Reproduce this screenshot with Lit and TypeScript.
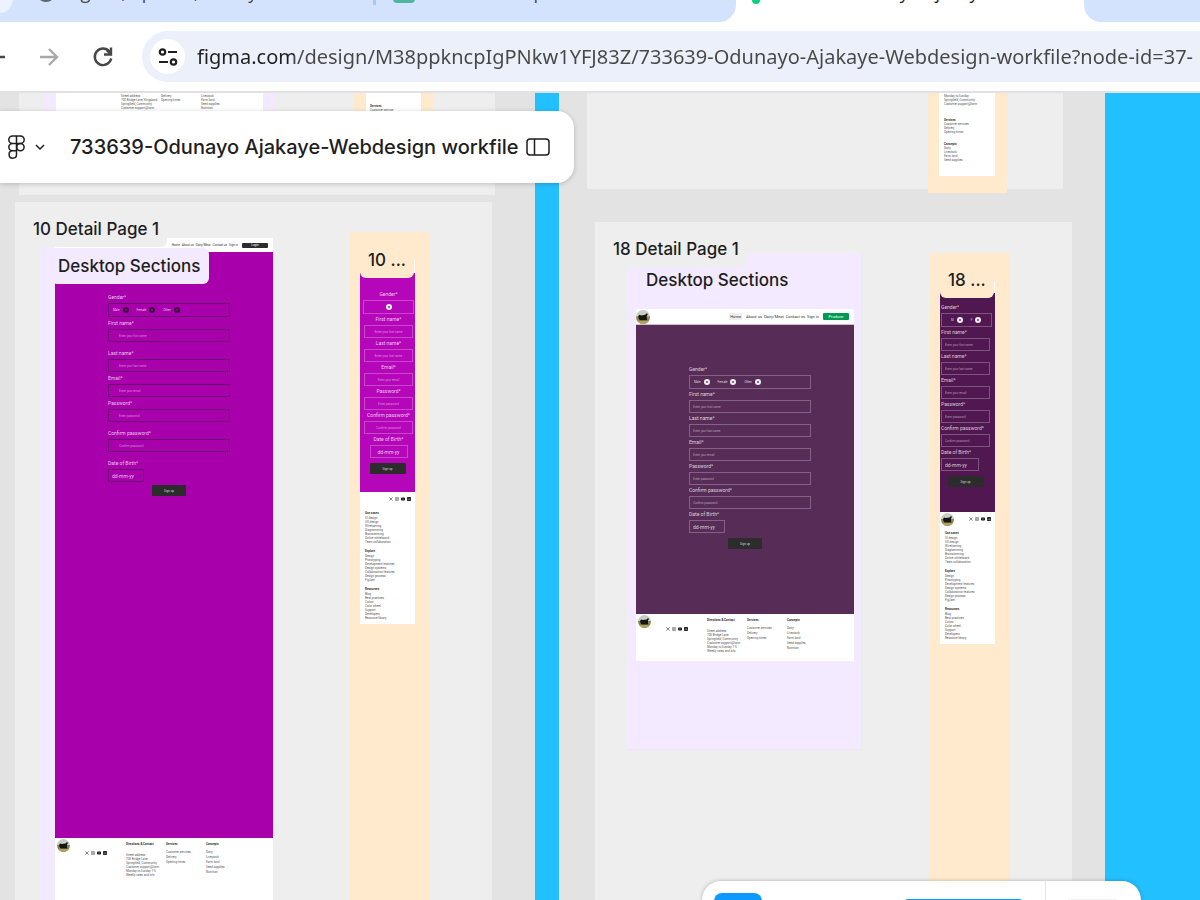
import { LitElement, html, css, svg } from "lit";
import { customElement, property } from "lit/decorators.js";

const avatar = svg`<svg class="avatar" viewBox="0 0 26 26">
  <defs><clipPath id="round"><circle cx="13" cy="13" r="13"/></clipPath></defs>
  <g clip-path="url(#round)">
    <rect width="26" height="13" fill="#c9ccc9"/>
    <rect y="12" width="26" height="14" fill="#8b8657"/>
    <rect y="20" width="26" height="6" fill="#b3a05f"/>
    <path d="M6 9l4 1 7-1 3-3 2 2-2 3v5l1 3H7l-2-3-1-4z" fill="#15180f"/>
  </g>
</svg>`;

const socials = html`<span class="socials">
  <svg viewBox="0 0 12 12"><path d="M1 1l10 10M11 1L1 11" stroke="#222" stroke-width="1.6" fill="none"/></svg>
  <svg viewBox="0 0 12 12"><rect x="1" y="1" width="10" height="10" rx="3" fill="none" stroke="#333" stroke-width="1.6"/><circle cx="6" cy="6" r="2.4" fill="none" stroke="#333" stroke-width="1.4"/></svg>
  <svg viewBox="0 0 12 12"><rect y="1.500" width="12" height="9" rx="3" fill="#111"/><path d="M5 4l3 2-3 2z" fill="#fff"/></svg>
  <svg viewBox="0 0 12 12"><rect width="12" height="12" rx="2" fill="#222"/><path d="M3 5v4M6 9V5M6 7q2-3 3 0v2" stroke="#fff" fill="none"/></svg>
</span>`;

const fields = [
  { key: "first", label: "First name*", hint: "Enter your first name", roomy: false },
  { key: "last", label: "Last name*", hint: "Enter your last name", roomy: true },
  { key: "email", label: "Email*", hint: "Enter your email", roomy: false },
  { key: "password", label: "Password*", hint: "Enter password", roomy: false },
  { key: "confirm", label: "Confirm password*", hint: "Confirm password", roomy: true },
];

@customElement("signup-form")
class SignupForm extends LitElement {
  @property({ type: Array }) options: string[] = [];
  @property() action = "Sign up";

  static styles = css`
    :host { display: block; font-family: Roboto, sans-serif; font-size: 5px; color: rgb(255 255 255 / 78%); --line: rgb(255 255 255 / 26%); --gap: 1px; --room: 0; --pad: 3px; --shift: 10px; }
    :host([tone="dark"]) { --line: rgb(50 0 60 / 50%); --gap: 2px; --room: 5px; --pad: 10px; --shift: 0; }
    form { display: flex; flex-direction: column; gap: var(--gap); margin: 0; }
    .field, fieldset { display: flex; flex-direction: column; gap: 2px; margin: 0; padding: 0; border: 0; min-width: 0; }
    .roomy { margin-top: var(--room); }
    label, legend { line-height: 8px; padding: 0; }
    legend { margin-bottom: 2px; }
    .box, .options { box-sizing: border-box; height: 13px; border: 1px solid var(--line); border-radius: 0; background: none; color: inherit; outline: 0; }
    .box { width: 100%; padding: 0 var(--pad); font: 3px Roboto, sans-serif; }
    .box::placeholder { color: rgb(255 255 255 / 50%); opacity: 1; }
    .options { display: flex; align-items: center; gap: 8px; height: 14px; padding: 0 4px; }
    .option { display: flex; align-items: center; gap: 3px; font-size: 3px; }
    .option input { appearance: none; width: 6px; height: 6px; margin: 0; border-radius: 50%; background: #555; border: 2px solid #eee; }
    :host([tone="dark"]) .option input { background: #a400a8; border-color: #3b0640; }
    .date .box { width: 36px; font-size: 5px; padding: 0 3px; }
    .date .box::placeholder { color: rgb(255 255 255 / 78%); }
    button { align-self: center; box-sizing: border-box; width: 34px; height: 11px; margin: 4px var(--shift) 0 0; padding: 0; border: 0; border-radius: 1px; background: #2c2c2c; color: #ddd; font: 3px Roboto, sans-serif; }
    :host([tone="dark"]) button { margin-top: 1px; }
    :host([size="phone"]) .field .box { width: 49px; }
    :host([size="phone"]) .date .box { width: 38px; }
    :host([size="phone"]) .options { width: 51px; padding: 0 9px; }
    :host([size="phone"]) button { width: 36px; margin: 4px 2px 0 0; }
    :host([align="center"]) .field { align-items: center; }
    :host([align="center"]) .box { text-align: center; }
    :host([align="center"]) legend { margin-left: auto; margin-right: auto; }
    :host([align="center"]) .options { justify-content: center; }
    :host([align="center"]) .option { gap: 0; }
  `;

  render() {
    return html`<form>
      <fieldset>
        <legend>Gender*</legend>
        <div class="options">
          ${this.options.map((o) => html`<label class="option">${o}<input type="radio" name="gender" aria-label="Gender" /></label>`)}
        </div>
      </fieldset>
      ${fields.map((f) => html`<div class=${f.roomy ? "field roomy" : "field"}>
        <label for=${f.key}>${f.label}</label>
        <input class="box" id=${f.key} placeholder=${f.hint} />
      </div>`)}
      <div class="field date roomy">
        <label for="dob">Date of Birth*</label>
        <input class="box" id="dob" placeholder="dd-mm-yy" />
      </div>
      <button type="button">${this.action}</button>
    </form>`;
  }
}

const deskColumns = [
  { title: "Directions & Contact", wide: true, rows: ["Street address", "700 Bridge Lane", "Springfield, Community", "Customer support@farm", "Monday to Sunday 7-5", "Weekly rates and info"] },
  { title: "Services", wide: false, rows: ["Customer services", "Delivery", "Opening times"] },
  { title: "Concepts", wide: false, rows: ["Dairy", "Livestock", "Farm land", "Seed supplies", "Nutrition"] },
];

const phoneGroups = [
  { title: "Use cases", rows: ["UI design", "UX design", "Wireframing", "Diagramming", "Brainstorming", "Online whiteboard", "Team collaboration"] },
  { title: "Explore", rows: ["Design", "Prototyping", "Development features", "Design systems", "Collaboration features", "Design process", "FigJam"] },
  { title: "Resources", rows: ["Blog", "Best practices", "Colors", "Color wheel", "Support", "Developers", "Resource library"] },
];

@customElement("site-footer")
class SiteFooter extends LitElement {
  @property({ type: Boolean }) phone = false;
  @property({ type: Boolean }) logo = false;

  static styles = css`
    :host { display: block; font-family: Roboto, sans-serif; font-size: 3px; color: #555; background: #fff; }
    .avatar { display: block; width: 13px; height: 13px; }
    .socials { display: flex; gap: 2px; }
    .socials svg { width: 4px; height: 4px; }
    h4 { margin: 0; font-size: 3px; line-height: 4px; font-weight: 600; color: #222; white-space: nowrap; }
    ul { margin: 0; padding: 0; list-style: none; white-space: nowrap; }
    .desk { display: flex; padding: 1px 2px; }
    .desk .socials { margin: 12px 19px 0 15px; }
    .desk section { width: 40px; padding-top: 3px; }
    .desk ul { padding-top: 4px; }
    .desk .wide { padding-top: 7px; }
    .desk li { line-height: 5px; }
    .desk .wide li { line-height: 4px; }
    .top { display: flex; align-items: center; justify-content: space-between; height: 14px; padding: 0 4px 0 1px; }
    .top .socials { margin-left: auto; }
    .groups { display: flex; flex-direction: column; gap: 4px; padding: 4px 5px 3px; }
    .groups h4 { line-height: 6px; }
    .groups li { line-height: 4px; }
  `;

  render() {
    return this.phone
      ? html`<div class="top">${this.logo ? avatar : ""}${socials}</div>
          <div class="groups">${phoneGroups.map((g) => html`<section><h4>${g.title}</h4><ul>${g.rows.map((r) => html`<li>${r}</li>`)}</ul></section>`)}</div>`
      : html`<div class="desk">${avatar}${socials}
          ${deskColumns.map((c) => html`<section><h4>${c.title}</h4><ul class=${c.wide ? "wide" : ""}>${c.rows.map((r) => html`<li>${r}</li>`)}</ul></section>`)}</div>`;
  }
}

@customElement("app-root")
class AppRoot extends LitElement {
  static styles = css`
    :host { display: flex; flex-direction: column; height: 100vh; overflow: hidden; font-family: Inter, sans-serif; color: #1e1e1e; background: #fff; }
    * { box-sizing: border-box; }
    button { padding: 0; border: 0; background: none; color: inherit; font: inherit; }
    svg { display: block; }

    .tabs { flex: none; height: 22px; display: flex; align-items: flex-end; overflow: hidden; background: #fff; font: 18px/26px "Open Sans", sans-serif; }
    .tab { display: flex; align-items: center; height: 26px; margin-bottom: 17px; white-space: nowrap; color: #474747; }
    .group { display: flex; align-items: flex-end; width: 736px; background: #d3e3fd; border-radius: 0 0 17px 0; }
    .search { width: 33px; height: 33px; margin: 0 13px 9px -20px; border-radius: 14px; background: #ecf3fe; }
    .first { width: 350px; padding-left: 10px; gap: 10px; border-right: 3px solid #a8c7fa; }
    .second { padding-left: 17px; gap: 15px; }
    .globe { width: 20px; height: 20px; border-radius: 50%; background: #5f6368; }
    .sheet { width: 22px; height: 22px; border-radius: 4px; background: #4db6a0; }
    .current { width: 348px; padding-left: 16px; gap: 15px; color: #1f1f1f; }
    .dot { width: 8px; height: 24px; border-radius: 4px; background: #0acf83; }
    .tabs .rest { flex: 1; height: 56px; background: #d3e3fd; border-radius: 0 0 0 17px; }

    .toolbar { flex: none; display: flex; align-items: center; height: 71px; border-bottom: 2px solid #e1e1e1; }
    .back { width: 5px; height: 24px; overflow: hidden; display: flex; justify-content: flex-end; }
    .back svg, .forward svg { width: 24px; height: 24px; flex: none; }
    .forward { margin-left: 31px; }
    .reload { margin-left: 31px; }
    .reload svg { width: 24px; height: 24px; }
    .address { flex: 1; min-width: 0; display: flex; align-items: center; height: 51px; margin-left: 27px; padding-left: 8px; border-radius: 26px 0 0 26px; background: #ecf0fa; }
    .tune { flex: none; display: grid; place-items: center; width: 35px; height: 35px; border-radius: 50%; background: #fff; }
    .tune svg { width: 20px; height: 20px; }
    .url { flex: 1; min-width: 0; margin-left: 12px; padding: 0; border: 0; outline: 0; font: 20px/30px "Noto Sans", sans-serif; color: transparent; background: linear-gradient(90deg, #1f1f1f 97px, #474747 97px); background-clip: text; -webkit-background-clip: text; }

    .canvas { flex: 1; min-height: 0; position: relative; overflow: hidden; background: #e3e3e3; }
    .canvas > * { position: absolute; }
    .board { background: #eee; }
    .board-a { left: 19px; top: 0; width: 476px; height: 102px; }
    .board-b { left: 15px; top: 109px; width: 477px; bottom: 0; }
    .board-c { left: 587px; top: 0; width: 476px; height: 96px; }
    .board-d { left: 595px; top: 129px; width: 477px; bottom: 0; }
    .blue { background: #23c0ff; top: 0; bottom: 0; }
    .blue-mid { left: 535px; width: 24px; }
    .blue-end { left: 1105px; right: 0; }
    .section { background: #f3eaff; }
    .peach { background: #ffeacd; }
    .section-a { left: 43px; top: 0; width: 233px; height: 30px; padding: 0 13px; }
    .section-b { left: 40px; top: 145px; width: 233px; bottom: 0; padding-left: 15px; }
    .section-d { left: 628px; top: 160px; width: 234px; height: 497px; padding: 56px 8px; border: 1px solid #efe5fa; border-width: 0 1px 1px 0; }
    .peach-a { left: 354px; top: 0; width: 79px; height: 30px; padding: 0 12px; }
    .peach-b { left: 350px; top: 139px; width: 80px; bottom: 0; padding: 29px 15px 0 10px; }
    .peach-c { left: 928px; top: 0; width: 79px; height: 100px; padding: 0 12px 0 11px; }
    .peach-d { left: 930px; top: 160px; width: 80px; bottom: 0; padding: 28px 15px 0 10px; }

    .paper { background: #fff; font: 3px/4px Roboto, sans-serif; color: #555; white-space: nowrap; }
    .paper p { margin: 0; }
    .paper b { display: block; color: #222; font-weight: 600; }
    .paper-a { display: flex; gap: 22px; height: 30px; padding: 1px 0 0 65px; overflow: hidden; }
    .paper-a p { width: 18px; }
    .paper-pa { height: 30px; padding: 11px 0 0 4px; }
    .paper-c { display: flex; flex-direction: column; gap: 12px; height: 83px; padding: 1px 5px; }
    .paper-c .last { margin-top: -4px; }

    .page { display: flex; flex-direction: column; width: 218px; background: #fff; }
    .nav { display: flex; align-items: center; justify-content: flex-end; height: 14px; padding-right: 5px; gap: 2px; font: 3px Roboto, sans-serif; color: #333; }
    .nav a { color: inherit; text-decoration: none; }
    .nav button { width: 26px; height: 5px; margin-left: 2px; border-radius: 1px; background: #2c2c2c; color: #fff; }
    .nav-18 { height: 16px; font-size: 4px; border-bottom: 1px solid #cbbfd0; }
    .nav-18 .avatar { width: 14px; height: 14px; margin-right: auto; }
    .nav-18 button { height: 7px; background: #009951; }
    .nav-18 .home { padding: 1px; margin-right: 2px; background: #eee; }
    .hero-10 { height: 586px; padding: 41px 43px 0 53px; background: #a800aa; }
    .hero-18 { height: 289px; padding: 40px 43px 0 53px; background: #572d58; }
    .page-10 { height: 100%; }
    .page-18 { height: 352px; }
    .phone { display: flex; flex-direction: column; background: #fff; }
    .phone .screen { height: 219px; margin-top: 12px; padding: 17px 1px 0 3px; background: #b606b9; }
    .phone-18 .screen { padding: 10px 3px 0 1px; background: #511750; }
    .phone site-footer { height: 132px; }

    .label { font-size: 17px; line-height: 20px; font-weight: 450; white-space: nowrap; padding: 6px 8px 8px 7px; border-radius: 6px; }
    .label-b { left: 26px; top: 120px; background: #eee; }
    .label-bs { left: 51px; top: 155px; padding: 8px 9px 8px 7px; background: #f3eaff; }
    .label-d { left: 606px; top: 140px; background: #eee; }
    .label-ds { left: 639px; top: 171px; background: #f3eaff; }
    .label-p { width: 54px; padding: 7px 8px 8px; background: #ffeacd; }
    .label-pb { left: 360px; top: 150px; }
    .label-pd { left: 940px; top: 170px; }

    .titlebar { left: 0; top: 18px; display: flex; align-items: center; width: 574px; height: 72px; padding-left: 8px; border-radius: 0 17px 17px 0; background: #fff; box-shadow: 0 1px 5px rgb(0 0 0 / 20%); }
    .menu { display: flex; align-items: center; gap: 9px; }
    .name { flex: 1; margin: 0 0 0 24px; font-size: 20px; line-height: 24px; font-weight: 450; white-space: nowrap; }
    .panel { margin-right: 24px; }
    .tools { left: 702px; bottom: 0; display: flex; align-items: flex-start; width: 439px; height: 19px; border-radius: 21px 21px 0 0; background: #fff; box-shadow: 0 0 4px rgb(0 0 0 / 25%); overflow: hidden; }
    .move { width: 48px; height: 48px; margin: 12px 0 0 12px; border-radius: 8px; background: #0d99ff; }
    .mode { width: 119px; height: 48px; margin: 18px 0 0 142px; border-radius: 4px; background: #0d99ff; }
    .share { width: 94px; height: 60px; margin-left: 22px; border-left: 1px solid #e3e3e3; padding: 18px 22px; }
    .share i { display: block; height: 2px; background: #f2f2f2; }
    .avatar { width: 14px; height: 14px; }
  `;

  render() {
    return html`
      <nav class="tabs" aria-label="Tabs">
        <div class="group">
          <span class="search"></span>
          <div class="tab first"><span class="globe"></span><span>Sign in, options, library</span></div>
          <div class="tab second"><span class="sheet"></span><span>Web course plan</span></div>
        </div>
        <div class="tab current"><span class="dot"></span><span>733639-Odunayo Ajakaye-Web</span></div>
        <div class="rest"></div>
      </nav>
      <header class="toolbar">
        <button class="back" aria-label="Back"><svg viewBox="0 0 24 24" fill="none" stroke="#474747" stroke-width="2.400"><path d="M24 12H4M12 4l-8 8 8 8"/></svg></button>
        <button class="forward" aria-label="Forward"><svg viewBox="0 0 24 24" fill="none" stroke="#a9a9a9" stroke-width="2.400"><path d="M4 12h17M13 4l8 8-8 8"/></svg></button>
        <button class="reload" aria-label="Reload"><svg viewBox="0 0 24 24" fill="none" stroke="#474747" stroke-width="2.400"><path d="M18.500 6.500A8.300 8.300 0 1 0 20.200 13.500"/><path d="M20 2.500V9.500H13"/><path d="M16 5l4 4" stroke-width="3"/></svg></button>
        <div class="address">
          <button class="tune" aria-label="Site information"><svg viewBox="0 0 20 20" fill="none" stroke="#1f1f1f" stroke-width="2.200"><circle cx="4.500" cy="5" r="2.700"/><path d="M10 5h9M1 15h9"/><circle cx="15.500" cy="15" r="2.700"/></svg></button>
          <input class="url" aria-label="Address" value="figma.com/design/M38ppkncpIgPNkw1YFJ83Z/733639-Odunayo-Ajakaye-Webdesign-workfile?node-id=37-" />
        </div>
      </header>
      <main class="canvas">
        <div class="board board-a"></div>
        <div class="board board-b"></div>
        <div class="blue blue-mid"></div>
        <div class="board board-c"></div>
        <div class="board board-d"></div>
        <div class="blue blue-end"></div>

        <div class="section section-a"><div class="paper paper-a">
          <p>Street address<br />700 Bridge Lane, Kingsland<br />Springfield, Community<br />Customer support@farm</p>
          <p>Delivery<br />Opening times</p>
          <p>Livestock<br />Farm land<br />Seed supplies<br />Nutrition</p>
        </div></div>
        <div class="peach peach-a"><div class="paper paper-pa"><b>Services</b>Customer service</div></div>
        <div class="peach peach-c"><div class="paper paper-c">
          <p>Monday to Sunday<br />Springfield, Community<br />Customer support@farm</p>
          <p><b>Services</b>Customer services<br />Delivery<br />Opening times</p>
          <p class="last"><b>Concepts</b>Dairy<br />Livestock<br />Farm land<br />Seed supplies</p>
        </div></div>

        <div class="section section-b"><div class="page page-10">
          <div class="nav">
            <a href="#">Home</a><a href="#">About us</a><a href="#">Dairy/Meat</a><a href="#">Contact us</a><a href="#">Sign in</a><button>Login</button>
          </div>
          <div class="hero-10"><signup-form tone="dark" .options=${["Male", "Female", "Other"]}></signup-form></div>
          <site-footer></site-footer>
        </div></div>
        <div class="peach peach-b"><div class="phone">
          <div class="screen"><signup-form size="phone" align="center" .options=${[""]}></signup-form></div>
          <site-footer phone></site-footer>
        </div></div>

        <div class="section section-d"><div class="page page-18">
          <div class="nav nav-18">
            ${avatar}<a class="home" href="#">Home</a><a href="#">About us</a><a href="#">Dairy/Meat</a><a href="#">Contact us</a><a href="#">Sign in</a><button>Produce</button>
          </div>
          <div class="hero-18"><signup-form .options=${["Male", "Female", "Other"]}></signup-form></div>
          <site-footer></site-footer>
        </div></div>
        <div class="peach peach-d"><div class="phone phone-18">
          <div class="screen"><signup-form size="phone" .options=${["M", "F"]}></signup-form></div>
          <site-footer phone logo></site-footer>
        </div></div>

        <div class="label label-bs">Desktop Sections</div>
        <div class="label label-b">10 Detail Page 1</div>
        <div class="label label-ds">Desktop Sections</div>
        <div class="label label-d">18 Detail Page 1</div>
        <div class="label label-p label-pb">10 ...</div>
        <div class="label label-p label-pd">18 ...</div>

        <div class="titlebar">
          <button class="menu" aria-label="Main menu">
            <svg width="17" height="24" viewBox="0 0 17 24" fill="none" stroke="#1e1e1e" stroke-width="1.500"><path d="M8.500 1H4.500a3.700 3.700 0 0 0 0 7.400h4zM8.500 1h4a3.700 3.700 0 0 1 0 7.400h-4zM8.500 8.400h-4a3.700 3.700 0 0 0 0 7.400h4zM8.500 15.800h-4a3.700 3.700 0 1 0 4 3.700z"/><circle cx="12.400" cy="12.100" r="3.700"/></svg>
            <svg width="12" height="12" viewBox="0 0 12 12" fill="none" stroke="#1e1e1e" stroke-width="1.500"><path d="M2 4l4 4 4-4"/></svg>
          </button>
          <h1 class="name">733639-Odunayo Ajakaye-Webdesign workfile</h1>
          <button class="panel" aria-label="Toggle panels"><svg width="24" height="18" viewBox="0 0 24 18" fill="none" stroke="#1e1e1e" stroke-width="1.500"><rect x="1" y="1" width="22" height="16" rx="3"/><path d="M8.500 1v16"/></svg></button>
        </div>
        <div class="tools">
          <button class="move" aria-label="Move"></button>
          <button class="mode" aria-label="Design mode"></button>
          <div class="share"><i></i></div>
        </div>
      </main>
    `;
  }
}
